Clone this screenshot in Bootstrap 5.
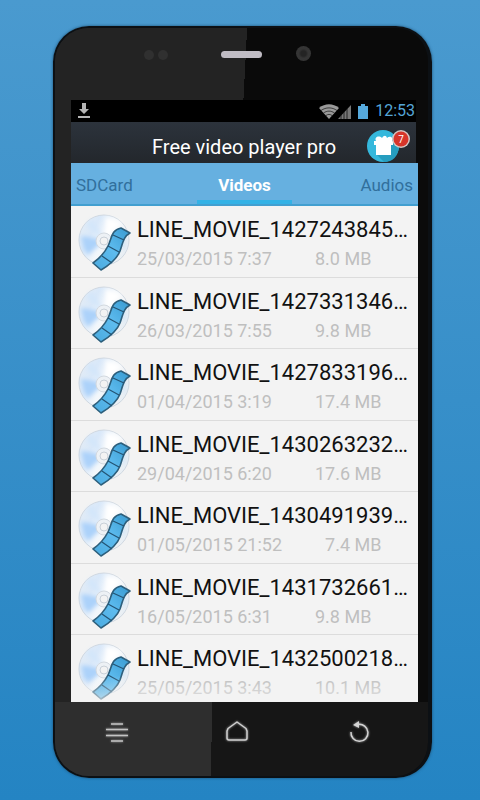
<!DOCTYPE html>
<html lang="en">
<head>
<meta charset="utf-8">
<meta name="viewport" content="width=device-width, initial-scale=1">
<title>Free video player pro</title>
<link href="https://cdn.jsdelivr.net/npm/bootstrap@5.3.0/dist/css/bootstrap.min.css" rel="stylesheet">
<style>
body { font-family: Roboto, "Noto Sans", sans-serif; background: linear-gradient(#4a9acf, #2484c3); padding: 26px 48px 22px 53px; line-height: 1; }
.phone { border: 2px solid #0c1014; border-right-width: 4px; border-radius: 36px; padding: 0 10px 0 16px; background: linear-gradient(90deg, #232323 30%, #0b0b0b 60%); box-shadow: 0 0 3px #1b4d70; overflow: hidden; }
.bezel-top { height: 72px; margin: 0 -10px 0 -16px; background: linear-gradient(93deg, #232323 51%, #0a0a0a 51%); display: grid; grid-template-columns: 89px 77px 75px 1fr; padding-top: 18px; }
.sensor { width: 10px; height: 10px; border-radius: 50%; background: #303030; }
.speaker { width: 41px; height: 7px; border-radius: 4px; background: #c0bcc4; margin-top: 5px; }
.camera { width: 15px; height: 15px; border-radius: 50%; background: radial-gradient(#242424 25%, #353535 45%); }
.status { height: 22px; background: #000; color: #55a5d6; font-size: 16px; padding: 0 1px 0 7px; margin-right: 2px; gap: 7px; }
.app-title { height: 41px; background: linear-gradient(#2c333c, #23272c); color: #fff; margin-right: 2px; padding: 0 3px 0 81px; }
.app-title h1 { font-size: 20px; line-height: 24px; padding-top: 8px; }
.gift { width: 46px; height: 36px; }
.tabs { height: 43px; background: #66b0e0; border-bottom: 2px solid #429fd0; display: grid; grid-template-columns: 1fr 95px 1fr; }
.tabs button { border: 0; background: none; padding: 4px 5px 0; font-size: 17px; color: #316f9c; }
.tabs .current { color: #fff; font-weight: 700; border-bottom: 4px solid #33b2e6; padding-top: 8px; }
.screen { background: #f3f3f3; overflow: hidden; }
.videos { display: grid; grid-auto-rows: 1fr; margin-bottom: -5px; }
.videos a { min-height: 71px; padding: 7px 7px 4px; gap: 5px; border-bottom: 1px solid #dcdcdc; color: #111; }
.disc { width: 54px; height: 58px; }
.clip-name { font-size: 22px; line-height: 34px; }
.clip-info { font-size: 18px; line-height: 24px; color: #bfbfbf; gap: 43px; }
.fade-end { position: absolute; left: 0; right: 0; bottom: 0; height: 26px; background: linear-gradient(#f3f3f300, #f3f3f3aa); pointer-events: none; }
.bezel-bottom { height: 74px; margin: 0 -10px 0 -16px; background: linear-gradient(91deg, #2e2e2e 42%, #161616 42%); padding: 14px 53px 0 46px; }
.bezel-bottom button { border: 0; background: none; padding: 0; width: 32px; height: 32px; }
.bezel-bottom svg { filter: drop-shadow(0 0 1px #aaa); }
</style>
<script src="https://cdn.jsdelivr.net/npm/bootstrap@5.3.0/dist/js/bootstrap.bundle.min.js"></script>
</head>
<body class="min-vh-100 d-flex flex-column">
<svg width="0" height="0" class="position-absolute" aria-hidden="true">
  <defs>
    <linearGradient id="sheen" x1="0" y1=".25" x2="1" y2=".75">
      <stop offset="0" stop-color="#e3ecf5"/><stop offset=".25" stop-color="#d9e8f9"/><stop offset=".5" stop-color="#f3f7fb"/><stop offset=".75" stop-color="#f2f4f6"/><stop offset="1" stop-color="#e4ecf3"/>
    </linearGradient>
    <linearGradient id="film" x1="1" y1="0" x2="0" y2="1"><stop offset="0" stop-color="#3799d0"/><stop offset=".5" stop-color="#5dbbee"/><stop offset="1" stop-color="#4aaadf"/></linearGradient>
    <filter id="soft"><feGaussianBlur stdDeviation="2"/></filter>
    <symbol id="disc" viewBox="0 0 54 58">
      <circle cx="26" cy="27" r="25" fill="url(#sheen)" stroke="#d0d8e1"/>
      <g filter="url(#soft)">
        <path d="M26 27 3 23 6 36 10 42Z" fill="#acd2fa"/>
        <path d="M26 27 8 12 14 6Z" fill="#d3e6fa"/>
        <path d="M26 27 28 4 44 10Z" fill="#fff"/>
        <path d="M26 27 48 24 47 37Z" fill="#d3e6f6"/>
      </g>
      <circle cx="26" cy="28" r="8" fill="#edf1f5" stroke="#d3d9e0"/>
      <circle cx="26" cy="28" r="4" fill="#f3f3f3" stroke="#c9d0d8"/>
      <path d="M43 15C33 17 34 25 30 33C26 41 22 45 15 50L23 57C33 51 39 46 42 38C45 29 46 23 52 20Z" fill="url(#film)" stroke="#2d5f7c" stroke-width="1.6" stroke-linejoin="round"/>
      <path d="M35 22 46 27M30 33 41 39M24 43 34 50" stroke="#245474" stroke-width="1.2"/>
    </symbol>
  </defs>
</svg>
<main class="phone d-flex flex-column flex-grow-1">
  <div class="bezel-top" aria-hidden="true">
    <span></span>
    <div class="d-flex gap-1 pt-1"><span class="sensor"></span><span class="sensor"></span></div>
    <span class="speaker"></span><span class="camera"></span>
  </div>
  <div class="status d-flex align-items-center">
    <svg class="me-auto" width="12" height="16" viewBox="0 0 12 16" fill="#b5b5b5"><path d="M4 0H8V6H11L6 11 1 6H4ZM0 13H12V15H0Z"/></svg>
    <svg width="32" height="15" viewBox="0 0 32 15"><path d="M0 4C6-1 14-1 20 4L10 15Z" fill="#999"/><path d="M2 6.500C7 3 13 3 18 6.500M4.500 9C8 6.500 12 6.500 15.500 9M7 11.500C9 10 11 10 13 11.500" fill="none" stroke="#222" stroke-width=".8"/><path d="M19 15H32V1Z" fill="#777"/><path d="M22 11V15M25 8V15M28 5V15" stroke="#111" stroke-width=".8"/></svg>
    <svg width="10" height="15" viewBox="0 0 10 15"><path d="M3 0H7V2H10V15H0V2H3Z" fill="#55a9dc"/></svg>
    <span>12:53</span>
  </div>
  <header class="app-title d-flex justify-content-between">
    <h1 class="fw-normal mb-0 align-self-center">Free video player pro</h1>
    <button class="btn p-0 border-0 align-self-end d-flex" aria-label="Gifts, 7 new">
      <svg class="gift" viewBox="0 0 46 36">
        <circle cx="16" cy="19" r="16" fill="#35b8dc"/>
        <path d="M9 27 17 35C26 35 31 29 32 20L26 14Z" fill="#269dbf"/>
        <path d="M7 14H9C7 10 12 8 15 11 17 8 19 8 20 11 23 8 27 11 25 14H26V18H24V28H9V18H7Z" fill="#fff"/>
        <circle cx="34" cy="12" r="9" fill="#d5c5c2"/><circle cx="34" cy="12" r="7.500" fill="#d7352a"/>
        <text x="34" y="16" text-anchor="middle" font-size="10" fill="#fff">7</text>
      </svg>
    </button>
  </header>
  <nav class="tabs" aria-label="Media">
    <button class="text-start">SDCard</button>
    <button class="current" aria-current="page">Videos</button>
    <button class="text-end">Audios</button>
  </nav>
  <section class="screen position-relative d-flex flex-column flex-grow-1">
    <div class="videos flex-grow-1">
      <a href="#" class="d-flex text-decoration-none"><svg class="disc flex-shrink-0"><use href="#disc"/></svg><div><div class="clip-name text-nowrap">LINE_MOVIE_1427243845…</div><div class="clip-info d-flex"><span>25/03/2015 7:37</span><span>8.0 MB</span></div></div></a>
      <a href="#" class="d-flex text-decoration-none"><svg class="disc flex-shrink-0"><use href="#disc"/></svg><div><div class="clip-name text-nowrap">LINE_MOVIE_1427331346…</div><div class="clip-info d-flex"><span>26/03/2015 7:55</span><span>9.8 MB</span></div></div></a>
      <a href="#" class="d-flex text-decoration-none"><svg class="disc flex-shrink-0"><use href="#disc"/></svg><div><div class="clip-name text-nowrap">LINE_MOVIE_1427833196…</div><div class="clip-info d-flex"><span>01/04/2015 3:19</span><span>17.4 MB</span></div></div></a>
      <a href="#" class="d-flex text-decoration-none"><svg class="disc flex-shrink-0"><use href="#disc"/></svg><div><div class="clip-name text-nowrap">LINE_MOVIE_1430263232…</div><div class="clip-info d-flex"><span>29/04/2015 6:20</span><span>17.6 MB</span></div></div></a>
      <a href="#" class="d-flex text-decoration-none"><svg class="disc flex-shrink-0"><use href="#disc"/></svg><div><div class="clip-name text-nowrap">LINE_MOVIE_1430491939…</div><div class="clip-info d-flex"><span>01/05/2015 21:52</span><span>7.4 MB</span></div></div></a>
      <a href="#" class="d-flex text-decoration-none"><svg class="disc flex-shrink-0"><use href="#disc"/></svg><div><div class="clip-name text-nowrap">LINE_MOVIE_1431732661…</div><div class="clip-info d-flex"><span>16/05/2015 6:31</span><span>9.8 MB</span></div></div></a>
      <a href="#" class="d-flex text-decoration-none"><svg class="disc flex-shrink-0"><use href="#disc"/></svg><div><div class="clip-name text-nowrap">LINE_MOVIE_1432500218…</div><div class="clip-info d-flex"><span>25/05/2015 3:43</span><span>10.1 MB</span></div></div></a>
    </div>
    <div class="fade-end"></div>
  </section>
  <div class="bezel-bottom d-flex justify-content-between">
    <button aria-label="Menu"><svg width="32" height="32" viewBox="0 0 32 32" stroke="#c4c4c4" stroke-width="1.500"><path d="M10 8H22M5 13.500H27M5 19.500H27M10 25H22"/></svg></button>
    <button aria-label="Home"><svg width="32" height="32" viewBox="0 0 32 32" fill="none" stroke="#cfcfcf" stroke-width="1.500" stroke-linejoin="round"><path d="M15 6 24 12.500 25 15V22Q25 24 23 24H7Q5 24 5 22V15L6 12.500Z"/></svg></button>
    <button aria-label="Back"><svg width="32" height="32" viewBox="0 0 32 32" fill="none" stroke="#d4d4d4" stroke-width="1.500"><path d="M8 16A8.500 8.500 0 1 0 15 8.500"/><path d="M16 5V12L10 9Z" fill="#d4d4d4" stroke="none"/></svg></button>
  </div>
</main>
</body>
</html>
